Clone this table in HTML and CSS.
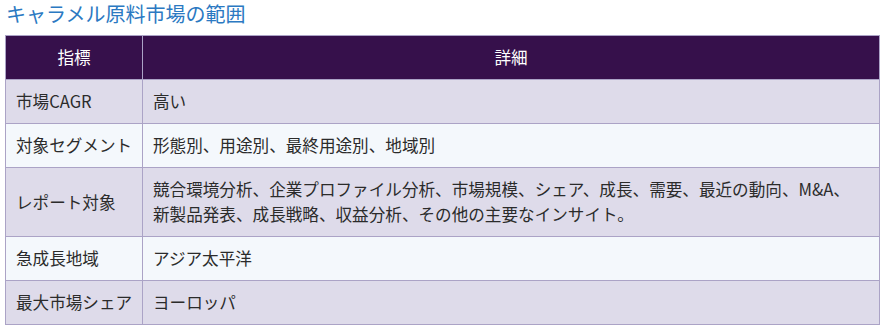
FILE: index.html
```html
<!DOCTYPE html>
<html lang="ja">
<head>
<meta charset="utf-8">
<link rel="stylesheet" href="styles.css">
</head>
<body>
<h2 class="title">キャラメル原料市場の範囲</h2>
<table class="scope">
<colgroup><col class="col-key"><col></colgroup>
<thead>
<tr><th>指標</th><th>詳細</th></tr>
</thead>
<tbody>
<tr><td>市場CAGR</td><td>高い</td></tr>
<tr><td>対象セグメント</td><td>形態別、用途別、最終用途別、地域別</td></tr>
<tr><td>レポート対象</td><td>競合環境分析、企業プロファイル分析、市場規模、シェア、成長、需要、最近の動向、M&amp;A、<br>新製品発表、成長戦略、収益分析、その他の主要なインサイト。</td></tr>
<tr><td>急成長地域</td><td>アジア太平洋</td></tr>
<tr><td>最大市場シェア</td><td>ヨーロッパ</td></tr>
</tbody>
</table>
</body>
</html>
```
FILE: styles.css
```css
html, body {
  margin: 0;
  padding: 0;
  background: #ffffff;
}
body {
  padding: 0 15px 0 5px;
  font-family: "Noto Sans CJK JP", "Liberation Sans", sans-serif;
}
.title {
  margin: 0 0 9px 1px;
  padding-top: 2px;
  font-size: 20px;
  line-height: 24px;
  font-weight: normal;
  color: #2b79c2;
}
.scope {
  width: 875px;
  table-layout: fixed;
  border-collapse: collapse;
  font-size: 16.6px;
  line-height: 25px;
  color: #2b2b2b;
}
.col-key {
  width: 137px;
}
.scope th, .scope td {
  border: 1px solid #aba3c6;
  padding: 9px 10px;
  text-align: left;
  font-weight: normal;
  vertical-align: middle;
}
.scope td:first-child {
  white-space: nowrap;
}
.scope th {
  background: #36104b;
  color: #ffffff;
  text-align: center;
}
.scope tbody tr:nth-child(odd) td {
  background: #dedbea;
}
.scope tbody tr:nth-child(even) td {
  background: #f4f8fc;
}
```
